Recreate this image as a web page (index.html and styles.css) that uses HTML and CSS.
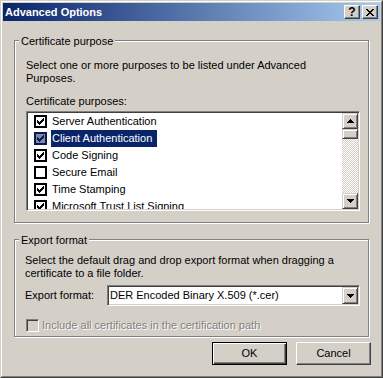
FILE: index.html
```html
<!DOCTYPE html>
<html lang="en">
<head>
    <meta charset="UTF-8">
    <title>Advanced Options</title>
    <link rel="stylesheet" href="styles.css">
</head>
<body>
    <div class="window">
        <div class="frame">
            <div class="titlebar">
                <span class="title">Advanced Options</span>
                <div class="caption-buttons">
                    <span class="caption-btn help">?</span>
                    <span class="caption-btn">
                        <svg width="8" height="7" viewBox="0 0 8 7" shape-rendering="crispEdges"><path d="M0 0h2v1H0zM6 0h2v1H6zM1 1h2v1H1zM5 1h2v1H5zM2 2h4v1H2zM3 3h2v1H3zM2 4h4v1H2zM1 5h2v1H1zM5 5h2v1H5zM0 6h2v1H0zM6 6h2v1H6z"/></svg>
                    </span>
                </div>
            </div>

            <div class="client">
                <div class="group group-purpose">
                    <span class="group-label">Certificate purpose</span>
                    <p class="hint">Select one or more purposes to be listed under Advanced<br>Purposes.</p>
                    <div class="field-label">Certificate purposes:</div>

                    <div class="listbox">
                        <ul class="list-items">
                            <li class="list-item">
                                <span class="check"><svg width="7" height="7" viewBox="0 0 7 7" shape-rendering="crispEdges"><path d="M0 2H1V3H2V4H3V3H4V2H5V1H6V0H7V3H6V4H5V5H4V6H3V7H2V6H1V5H0Z"/></svg></span>
                                <span class="item-text">Server Authentication</span>
                            </li>
                            <li class="list-item selected">
                                <span class="check"><svg width="7" height="7" viewBox="0 0 7 7" shape-rendering="crispEdges"><path d="M0 2H1V3H2V4H3V3H4V2H5V1H6V0H7V3H6V4H5V5H4V6H3V7H2V6H1V5H0Z"/></svg></span>
                                <span class="item-text">Client Authentication</span>
                            </li>
                            <li class="list-item">
                                <span class="check"><svg width="7" height="7" viewBox="0 0 7 7" shape-rendering="crispEdges"><path d="M0 2H1V3H2V4H3V3H4V2H5V1H6V0H7V3H6V4H5V5H4V6H3V7H2V6H1V5H0Z"/></svg></span>
                                <span class="item-text">Code Signing</span>
                            </li>
                            <li class="list-item">
                                <span class="check"></span>
                                <span class="item-text">Secure Email</span>
                            </li>
                            <li class="list-item">
                                <span class="check"><svg width="7" height="7" viewBox="0 0 7 7" shape-rendering="crispEdges"><path d="M0 2H1V3H2V4H3V3H4V2H5V1H6V0H7V3H6V4H5V5H4V6H3V7H2V6H1V5H0Z"/></svg></span>
                                <span class="item-text">Time Stamping</span>
                            </li>
                            <li class="list-item">
                                <span class="check"><svg width="7" height="7" viewBox="0 0 7 7" shape-rendering="crispEdges"><path d="M0 2H1V3H2V4H3V3H4V2H5V1H6V0H7V3H6V4H5V5H4V6H3V7H2V6H1V5H0Z"/></svg></span>
                                <span class="item-text">Microsoft Trust List Signing</span>
                            </li>
                        </ul>
                        <div class="scrollbar">
                            <span class="raised scroll-btn">
                                <svg width="7" height="4" viewBox="0 0 7 4" shape-rendering="crispEdges"><path d="M3 0h1v1h1v1h1v1h1v1H0V3h1V2h1V1h1z"/></svg>
                            </span>
                            <span class="raised scroll-thumb"></span>
                            <span class="scroll-track"></span>
                            <span class="raised scroll-btn">
                                <svg width="7" height="4" viewBox="0 0 7 4" shape-rendering="crispEdges"><path d="M0 0h7v1H6v1H5v1H4v1H3V3H2V2H1V1H0z"/></svg>
                            </span>
                        </div>
                    </div>
                </div>

                <div class="group group-export">
                    <span class="group-label">Export format</span>
                    <p class="hint">Select the default drag and drop export format when dragging a<br>certificate to a file folder.</p>

                    <div class="format-row">
                        <span class="format-label">Export format:</span>
                        <div class="combo">
                            <span class="combo-text">DER Encoded Binary X.509 (*.cer)</span>
                            <span class="raised combo-btn">
                                <svg width="7" height="4" viewBox="0 0 7 4" shape-rendering="crispEdges"><path d="M0 0h7v1H6v1H5v1H4v1H3V3H2V2H1V1H0z"/></svg>
                            </span>
                        </div>
                    </div>

                    <div class="include-row">
                        <span class="checkbox-disabled"></span>
                        <span class="disabled-text">Include all certificates in the certification path</span>
                    </div>
                </div>

                <div class="button-row">
                    <button class="btn btn-default">OK</button>
                    <button class="btn">Cancel</button>
                </div>
            </div>
        </div>
    </div>
</body>
</html>
```

FILE: styles.css
```css
* {
    margin: 0;
    padding: 0;
    box-sizing: border-box;
}

body {
    font-family: "Liberation Sans", Arial, sans-serif;
    font-size: 11px;
    line-height: 13px;
    color: #000;
    background: #d4d0c8;
}

/* window chrome */
.window {
    width: 383px;
    height: 378px;
    border: 1px solid;
    border-color: #d4d0c8 #404040 #404040 #d4d0c8;
}

.frame {
    height: 100%;
    border: 1px solid;
    border-color: #fff #808080 #808080 #fff;
    padding: 1px;
    display: flex;
    flex-direction: column;
}

.titlebar {
    height: 18px;
    display: flex;
    align-items: center;
    justify-content: space-between;
    padding: 0 2px;
    background: linear-gradient(to right, #0a246a, #a6caf0);
}

.title {
    color: #fff;
    font-weight: bold;
    line-height: 18px;
}

.caption-buttons {
    display: flex;
    gap: 2px;
}

.caption-btn {
    width: 16px;
    height: 14px;
    display: flex;
    align-items: center;
    justify-content: center;
    background: #d4d0c8;
    border: 1px solid;
    border-color: #fff #404040 #404040 #fff;
    box-shadow: inset -1px -1px #808080;
}

.caption-btn.help {
    font-weight: bold;
    font-size: 12px;
    line-height: 12px;
}

/* generic raised 3d face */
.raised {
    background: #d4d0c8;
    border: 1px solid;
    border-color: #d4d0c8 #404040 #404040 #d4d0c8;
    box-shadow: inset 1px 1px #fff, inset -1px -1px #808080;
}

.client {
    flex: 1;
    padding: 19px 9px 0 11px;
}

/* group boxes */
.group {
    position: relative;
    width: 355px;
    border: 1px solid #808080;
    box-shadow: 1px 1px 0 #fff, inset 1px 1px 0 #fff;
}

.group-label {
    position: absolute;
    top: -6px;
    left: 4px;
    padding: 0 2px;
    background: #d4d0c8;
}

.hint {
    white-space: nowrap;
}

.group-purpose {
    padding: 18px 8px 11px 11px;
}

.field-label {
    margin-top: 10px;
}

.listbox {
    margin-top: 3px;
    height: 100px;
    display: flex;
    padding: 1px;
    background: #fff;
    border: 1px solid;
    border-color: #808080 #fff #fff #808080;
    box-shadow: inset 1px 1px #404040, inset -1px -1px #d4d0c8;
    overflow: hidden;
}

.list-items {
    flex: 1;
    list-style: none;
    overflow: hidden;
}

.list-item {
    height: 17px;
    display: flex;
    align-items: center;
    padding-left: 6px;
    white-space: nowrap;
}

.check {
    width: 13px;
    height: 13px;
    margin-right: 4px;
    display: flex;
    align-items: center;
    justify-content: center;
    border: 2px solid #000;
    background: #fff;
}

.item-text {
    padding: 0 5px 0 1px;
    line-height: 17px;
}

.list-item.selected .item-text {
    background: #0a246a;
    color: #fff;
}

.list-item.selected .check {
    background: #7d88ad;
    border-color: #0a1a4a;
}

.list-item.selected .check svg {
    fill: #0a1a4a;
}

.scrollbar {
    width: 16px;
    display: flex;
    flex-direction: column;
    background: repeating-conic-gradient(#fff 0 25%, #d4d0c8 0 50%) 0 0 / 2px 2px;
}

.scroll-btn {
    height: 16px;
    display: flex;
    align-items: center;
    justify-content: center;
}

.scroll-thumb {
    height: 10px;
}

.scroll-track {
    flex: 1;
}

/* export format */
.group-export {
    margin-top: 16px;
    padding: 14px 8px 4px 10px;
}

.format-row {
    margin-top: 5px;
    display: flex;
    align-items: center;
}

.format-label {
    width: 82px;
}

.combo {
    width: 253px;
    height: 21px;
    display: flex;
    align-items: center;
    padding: 1px;
    background: #fff;
    border: 1px solid;
    border-color: #808080 #fff #fff #808080;
    box-shadow: inset 1px 1px #404040, inset -1px -1px #d4d0c8;
}

.combo-text {
    flex: 1;
    padding-left: 1px;
    white-space: nowrap;
}

.combo-btn {
    width: 16px;
    height: 17px;
    display: flex;
    align-items: center;
    justify-content: center;
}

.include-row {
    margin-top: 13px;
    display: flex;
    align-items: center;
}

.checkbox-disabled {
    width: 13px;
    height: 13px;
    margin-left: 1px;
    margin-right: 3px;
    background: #d4d0c8;
    border: 1px solid;
    border-color: #808080 #fff #fff #808080;
    box-shadow: inset 1px 1px #404040, inset -1px -1px #d4d0c8;
}

.disabled-text {
    color: #808080;
    text-shadow: 1px 1px 0 #fff;
    white-space: nowrap;
}

/* dialog buttons */
.button-row {
    margin-top: 5px;
    display: flex;
    justify-content: flex-end;
    gap: 9px;
}

.btn {
    width: 75px;
    height: 23px;
    font: inherit;
    color: #000;
    background: #d4d0c8;
    border: 1px solid;
    border-color: #fff #404040 #404040 #fff;
    box-shadow: inset -1px -1px #808080;
}

.btn-default {
    border-color: #000;
    box-shadow: inset 1px 1px #fff, inset -1px -1px #404040, inset -2px -2px #808080;
}
```
